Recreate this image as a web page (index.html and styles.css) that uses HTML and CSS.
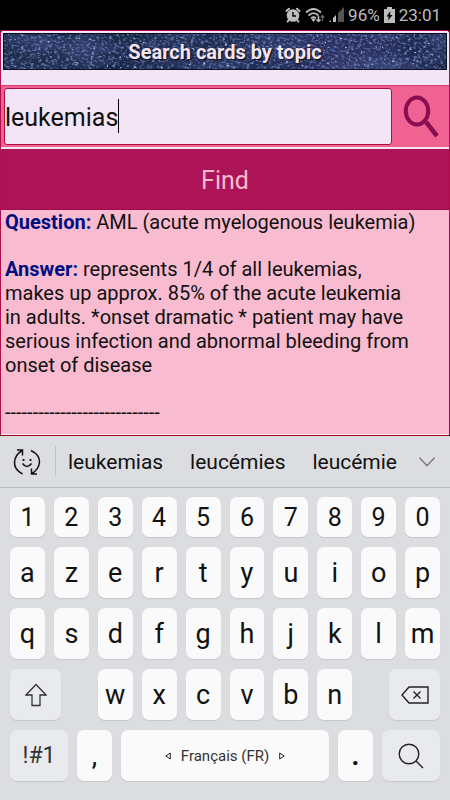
FILE: index.html
```html
<!DOCTYPE html>
<html lang="en">
<head>
<meta charset="utf-8">
<meta name="viewport" content="width=device-width, initial-scale=1">
<title>Search cards by topic</title>
<link rel="stylesheet" href="styles.css">
</head>
<body>
<header class="status">
  <svg width="16" height="16" viewBox="0 0 16 16" aria-hidden="true"><g fill="none" stroke="#bdbdbd" stroke-width="2" stroke-linecap="round"><path d="M1.500 4 4 1.700M14.500 4 12 1.700M3.600 13.400 2.600 14.600M12.400 13.400l1 1.200"/></g><circle cx="8" cy="8.500" r="6.300" fill="#bdbdbd"/><path d="M8 5v4h3" fill="none" stroke="#000" stroke-width="1.400"/></svg>
  <svg width="20" height="16" viewBox="0 0 20 16" aria-hidden="true"><g fill="none" stroke="#bdbdbd" stroke-width="1.800"><path d="M1 5.500Q8.500-1.500 16 5.500M3.500 8.500Q8.500 3.700 13.500 8.500M6 11.300Q8.500 9 11 11.300"/></g><path d="m6.500 12.500 2-1.500 2 1.500-2 2.500z" fill="#bdbdbd"/><path d="M13.500 9v5M11.500 12.500l2 2 2-2" fill="none" stroke="#bdbdbd" stroke-width="1.500"/><path d="M17.500 14V9M15.800 10.500l1.700-2 1.700 2" fill="none" stroke="#666" stroke-width="1.300"/></svg>
  <svg width="15" height="16" viewBox="0 0 15 16" aria-hidden="true"><path d="M0 15h2v-2zM4 15h3V8L4 11z" fill="#bdbdbd"/><path d="M9 15h6V0L9 6z" fill="#555"/></svg>
  <span>96%</span>
  <svg width="11" height="16" viewBox="0 0 11 16" aria-hidden="true"><path d="M3 0h5v2h3v14H0V2h3z" fill="#bdbdbd"/><path d="M6.500 4 2.500 9.500h2.300L4 13.500 8.500 8H6z" fill="#000"/></svg>
  <time>23:01</time>
</header>

<main class="app">
  <div class="banner">
    <svg class="stars" width="100%" height="100%" aria-hidden="true">
      <defs>
        <filter id="haze" x="0" y="0" width="100%" height="100%" color-interpolation-filters="sRGB">
          <feTurbulence type="fractalNoise" baseFrequency="0.02 0.04" numOctaves="3" seed="8"/>
          <feColorMatrix values="0 0 0 0 .25  0 0 0 0 .29  0 0 0 0 .5  1.500 0 0 0 -.5"/>
        </filter>
        <filter id="dust" x="0" y="0" width="100%" height="100%" color-interpolation-filters="sRGB">
          <feTurbulence type="fractalNoise" baseFrequency="0.3 0.5" numOctaves="3" seed="21"/>
          <feColorMatrix values="0 0 0 0 .42  0 0 0 0 .5  0 0 0 0 .75  0 3.500 0 0 -1.700"/>
        </filter>
        <filter id="specks" x="0" y="0" width="100%" height="100%" color-interpolation-filters="sRGB">
          <feTurbulence type="fractalNoise" baseFrequency="0.3 0.5" numOctaves="2" seed="5"/>
          <feColorMatrix values="0 0 0 0 .75  0 0 0 0 .76  0 0 0 0 .95  0 7 0 0 -4.500"/>
        </filter>
      </defs>
      <rect width="100%" height="100%" filter="url(#haze)"/>
      <g transform="rotate(14)">
        <rect width="140%" height="500%" y="-350%" x="-20%" filter="url(#dust)"/>
        <rect width="140%" height="500%" y="-350%" x="-20%" filter="url(#specks)"/>
      </g>
    </svg>
    <h1>Search cards by topic</h1>
  </div>

  <form class="search">
    <div class="search-row">
      <input type="text" aria-label="Topic" value="leukemias">
      <span class="caret" aria-hidden="true"></span>
      <button class="search-icon" type="button" aria-label="Search">
        <svg width="36" height="43" viewBox="0 0 36 43" aria-hidden="true"><ellipse cx="14" cy="16" rx="11.200" ry="13.500" fill="none" stroke="#880e4f" stroke-width="4"/><path d="M23 27 34 41" stroke="#880e4f" stroke-width="4.500"/></svg>
      </button>
    </div>
    <button class="find" type="button">Find</button>
  </form>

  <section class="result">
    <p><b>Question:</b> AML (acute myelogenous leukemia)</p>
    <p><b>Answer:</b> represents 1/4 of all leukemias, makes up approx. 85% of the acute leukemia in adults. *onset dramatic * patient may have serious infection and abnormal bleeding from onset of disease</p>
    <p>----------------------------</p>
  </section>
</main>

<section class="keyboard" aria-label="Keyboard">
  <div class="suggestions">
    <button class="mode" type="button" aria-label="Stickers">
      <svg width="28" height="28" viewBox="0 0 28 28" fill="none" stroke="#111" stroke-width="1.500" aria-hidden="true"><path d="M9.500 26Q1 21.500 1.500 14 2 7 9 2.500M4 2h5.500v5.500M18 2.500Q27 7 26.500 14 26 21 19 25.500M24 26h-5.500v-5.500"/><path d="M9.500 15.500q4.500 6 9 0"/><path d="M10.500 11v2M17.500 11v2" stroke-width="1.800"/></svg>
    </button>
    <div class="words">
      <button type="button">leukemias</button>
      <button type="button">leucémies</button>
      <button type="button">leucémie</button>
    </div>
    <button class="more" type="button" aria-label="More">
      <svg width="16" height="10" viewBox="0 0 16 10" fill="none" stroke="#777" stroke-width="1.300" aria-hidden="true"><path d="m.5.7 7.500 8 7.500-8"/></svg>
    </button>
  </div>

  <div class="keys">
    <div class="row digits">
      <button type="button">1</button><button type="button">2</button><button type="button">3</button><button type="button">4</button><button type="button">5</button><button type="button">6</button><button type="button">7</button><button type="button">8</button><button type="button">9</button><button type="button">0</button>
    </div>
    <div class="row">
      <button type="button">a</button><button type="button">z</button><button type="button">e</button><button type="button">r</button><button type="button">t</button><button type="button">y</button><button type="button">u</button><button type="button">i</button><button type="button">o</button><button type="button">p</button>
    </div>
    <div class="row">
      <button type="button">q</button><button type="button">s</button><button type="button">d</button><button type="button">f</button><button type="button">g</button><button type="button">h</button><button type="button">j</button><button type="button">k</button><button type="button">l</button><button type="button">m</button>
    </div>
    <div class="row">
      <button class="special shift" type="button" aria-label="Shift">
        <svg width="22" height="24" viewBox="0 0 22 24" fill="none" stroke="#333" stroke-width="1.300" aria-hidden="true"><path d="M11 1.500 21 12h-6v10.500H7V12H1z"/></svg>
      </button>
      <button type="button">w</button><button type="button">x</button><button type="button">c</button><button type="button">v</button><button type="button">b</button><button type="button">n</button>
      <button class="special erase" type="button" aria-label="Delete">
        <svg width="28" height="18" viewBox="0 0 28 18" fill="none" stroke="#222" stroke-width="1.400" aria-hidden="true"><path d="M8 1h19v16H8L1 9zM12.500 5.500l7 7M19.500 5.500l-7 7"/></svg>
      </button>
    </div>
    <div class="row bottom">
      <button class="special symbols" type="button">!#1</button>
      <button type="button">,</button>
      <button class="space" type="button">
        <svg width="6" height="8" viewBox="0 0 6 8" fill="none" stroke="#222" aria-hidden="true"><path d="M5.300 1v6L.8 4z"/></svg>
        <span>Français (FR)</span>
        <svg width="6" height="8" viewBox="0 0 6 8" fill="none" stroke="#222" aria-hidden="true"><path d="M.7 1v6l4.500-3z"/></svg>
      </button>
      <button class="stop" type="button">.</button>
      <button class="special" type="button" aria-label="Search">
        <svg width="26" height="26" viewBox="0 0 26 26" fill="none" stroke="#222" stroke-width="1.400" aria-hidden="true"><circle cx="11" cy="11" r="9.800"/><path d="m18 18 7 7"/></svg>
      </button>
    </div>
  </div>
</section>
</body>
</html>
```
FILE: styles.css
```css
* { box-sizing: border-box; }

body {
  margin: 0;
  min-height: 100vh;
  display: flex;
  flex-direction: column;
  background: #000;
  color: #111;
  font-family: Roboto, sans-serif;
}

button {
  margin: 0;
  padding: 0;
  border: 0;
  background: none;
  color: inherit;
  font: inherit;
}

svg { display: block; flex: none; }

.status {
  height: 30px;
  padding-right: 9px;
  display: flex;
  align-items: center;
  justify-content: flex-end;
  gap: 4px;
  color: #bdbdbd;
  font-size: 17px;
  line-height: 30px;
}

.app {
  flex: 1;
  display: flex;
  flex-direction: column;
  border: 1px solid #ad0f4f;
  border-bottom-color: #a00020;
  border-radius: 3px;
  background: #f3e5f5;
}

.banner {
  position: relative;
  margin: 2px 2px 15px;
  height: 37px;
  border: 1px solid #0a1024;
  background: linear-gradient(90deg, #14233b, #1a2745 35%, #232e58 60%, #2b3060 75%, #1a2748);
}

.stars {
  position: absolute;
  inset: 0;
}

h1 {
  position: relative;
  margin: 0;
  color: #f3e5f5;
  font-size: 20px;
  font-weight: 700;
  line-height: 36px;
  text-align: center;
  text-shadow: 1px 1px 2px #000;
}

.search-row {
  position: relative;
  display: flex;
  align-items: center;
  height: 62px;
  padding-left: 3px;
  border-top: 1px solid #d83a78;
  background: #f06292;
}

.search-row input {
  flex: 1;
  min-width: 0;
  height: 57px;
  padding: 2px 0 0;
  border: 1px solid #ad1040;
  border-radius: 3px;
  outline: 0;
  background: #f3e5f5;
  color: #111;
  font: 25px/30px Roboto, sans-serif;
}

.caret {
  position: absolute;
  left: 117px;
  top: 13px;
  width: 1px;
  height: 34px;
  background: #000;
}

.search-icon {
  width: 57px;
  display: grid;
  place-items: center;
}

.find {
  width: 100%;
  height: 61px;
  margin-top: 2px;
  padding-top: 2px;
  border-bottom: 1px solid #a00d4a;
  display: block;
  background: #ad1457;
  color: #f8bbd0;
  font-size: 25px;
}

.result {
  flex: 1;
  padding: 0 31px 0 4px;
  border-bottom: 1px solid #fbe9f1;
  background: #f8bbd0;
  font-size: 20px;
  line-height: 24px;
}

.result p { margin: 0 0 23px; }
.result p:last-child { margin: 0; }
.result b { color: #000f80; }

.keyboard { background: #dcdde1; }

.suggestions {
  height: 52px;
  padding: 0 15px 0 13px;
  display: flex;
  align-items: center;
  border-bottom: 1px solid #b9babe;
  font-size: 21px;
}

.mode {
  height: 31px;
  padding-right: 14px;
  border-right: 1px solid #c2c3c7;
}

.words {
  flex: 1;
  display: flex;
  justify-content: space-between;
  padding: 0 22px 0 12px;
}

.keys {
  display: flex;
  flex-direction: column;
  gap: 10px;
  padding: 9px 10px 19px;
}

.row {
  display: grid;
  grid-template-columns: repeat(10, 1fr);
  gap: 9px;
  height: 51px;
  font-size: 27px;
}

.row button {
  min-width: 0;
  display: flex;
  align-items: center;
  justify-content: center;
  border-radius: 7px;
  background: #fafafa;
  box-shadow: 0 1px 1px #c6c7cb;
}

.digits {
  height: 40px;
  font-size: 25px;
}

.row .special {
  background: #e9eaee;
  color: #333;
}

.row .shift { grid-column: span 2; width: 51px; }
.row .erase { grid-column: span 2; width: 51px; justify-self: end; }

.bottom { grid-template-columns: 58px 35px 1fr 35px 58px; }
.bottom .symbols { font-size: 23px; }
.bottom .stop { font-weight: 700; }

.bottom .space {
  gap: 10px;
  font-size: 15px;
  color: #333;
}
```
